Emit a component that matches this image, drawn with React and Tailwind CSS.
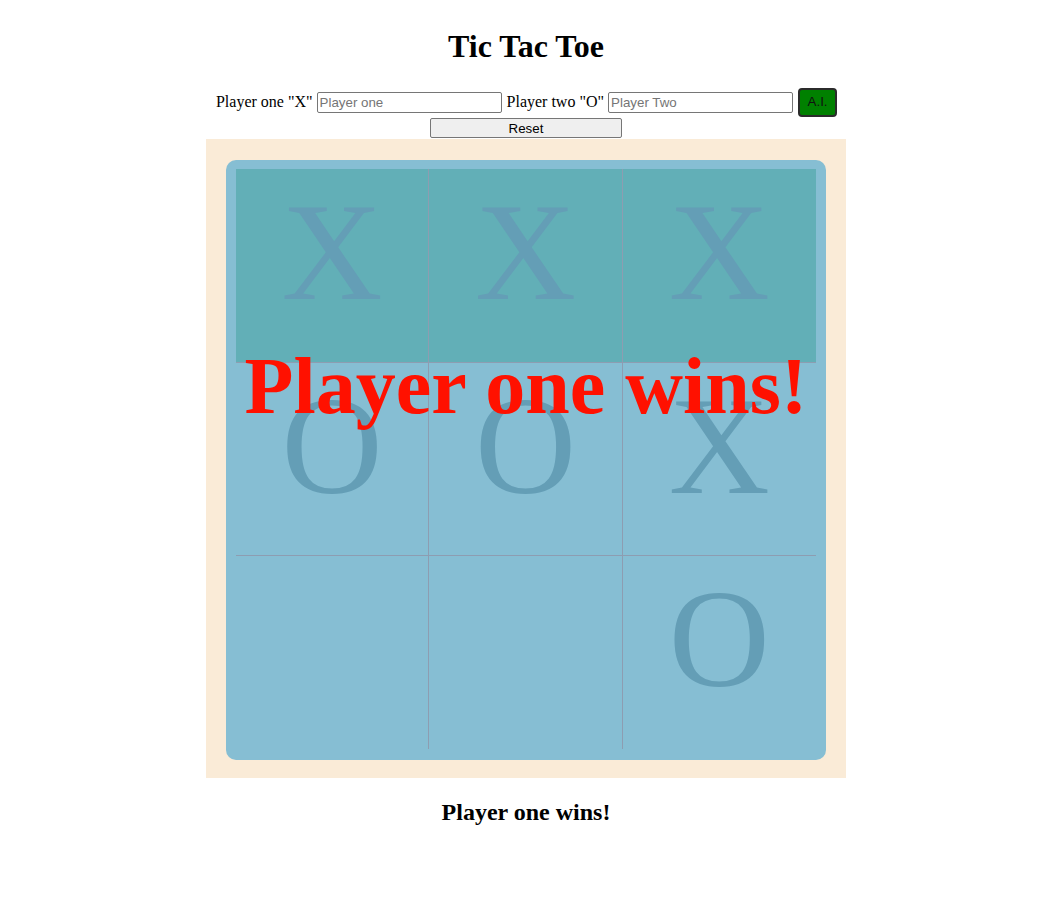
import React, { useState } from 'react';

const serif = "font-['Liberation_Serif',serif]";
const sans = "font-['Liberation_Sans',sans-serif]";

const Cell = ({ value, index, highlight }) => {
    const col = index % 3;
    const row = Math.floor(index / 3);
    return (
        <div
            className={
                'flex justify-center items-start pt-[13px] h-[193.33px] leading-none text-[140px] text-[#649eb6] ' +
                (col < 2 ? 'border-r border-[#8d9db1] ' : '') +
                (row < 2 ? 'border-b border-[#8d9db1] ' : '') +
                (highlight ? 'bg-[#62afb7]' : '')
            }
        >
            {value}
        </div>
    );
};

const App = () => {
    const [board] = useState(['X', 'X', 'X', 'O', 'O', 'X', '', '', 'O']);
    const winLine = [0, 1, 2];
    const message = 'Player one wins!';

    return (
        <div className={`min-h-screen bg-white text-black p-2 ${serif}`}>
            <h1 className="text-[32px] font-bold text-center mt-[21.44px] mb-[21.44px] leading-[35.4px]">Tic Tac Toe</h1>

            <div className="flex flex-col items-center">
                <div className="flex items-center h-[32px] text-[16px] pl-[1px]">
                    <span>Player one "X"</span>
                    <input
                        className={`ml-[4px] w-[185px] h-[21px] px-[2px] border border-[#767676] rounded-[2px] text-[13.33px] ${sans} placeholder:text-[#757575]`}
                        placeholder="Player one"
                    />
                    <span className="ml-[5px]">Player two "O"</span>
                    <input
                        className={`ml-[4px] w-[185px] h-[21px] px-[2px] border border-[#767676] rounded-[2px] text-[13.33px] ${sans} placeholder:text-[#757575]`}
                        placeholder="Player Two"
                    />
                    <button className={`ml-[5px] w-[39px] h-[29px] bg-[#008000] border-2 border-[#2b2b2b] rounded-[4px] text-[13.33px] text-[#111] ${sans}`}>
                        A.I.
                    </button>
                </div>
                <button className={`w-[192px] h-[20px] bg-[#efefef] border border-[#767676] rounded-[2px] text-[13.33px] leading-none ${sans}`}>
                    Reset
                </button>

                <div className="mt-[1px] w-[640px] h-[639px] bg-[#faebd7] pt-[21px] px-[20px]">
                    <div className="relative w-[600px] h-[600px] bg-[#86bed3] rounded-[10px] pt-[9px] px-[10px]">
                        <div className="grid grid-cols-3">
                            {board.map((v, i) => (
                                <Cell key={i} value={v} index={i} highlight={winLine.includes(i)} />
                            ))}
                        </div>
                        <div className="absolute left-0 right-0 top-[182px] text-center text-[80px] font-bold text-[#ff1100] leading-[88.6px] pointer-events-none">
                            {message}
                        </div>
                    </div>
                </div>
            </div>

            <h2 className="text-[24px] font-bold text-center mt-[20.92px] leading-[26.6px]">{message}</h2>
        </div>
    );
};

export default App;
